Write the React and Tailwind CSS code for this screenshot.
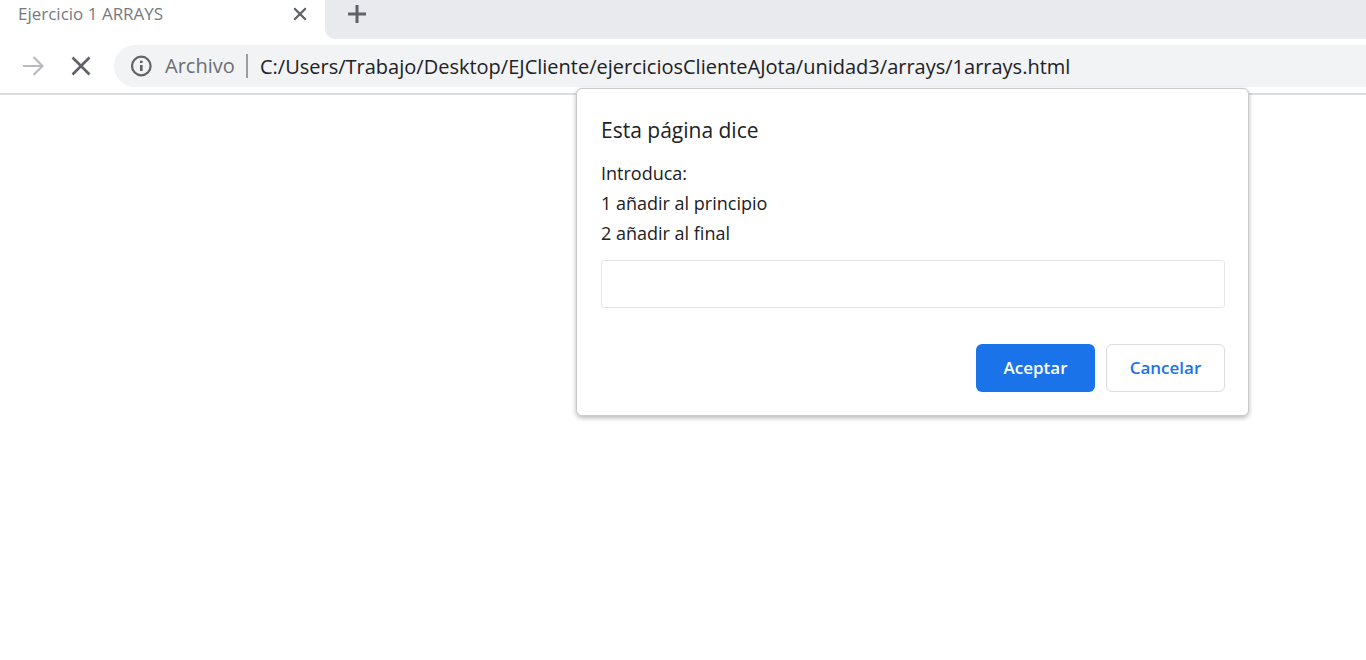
function TabStrip() {
  return (
    <div className="flex h-[39px] bg-white">
      <div className="flex h-7 w-[325px] shrink-0 items-center justify-between pr-4 pl-[18px]">
        <span className="text-[17px] leading-7 text-[#76797d]">Ejercicio 1 ARRAYS</span>
        <button type="button" aria-label="Cerrar pestaña" className="flex size-[18px] items-center justify-center">
          <svg viewBox="0 0 18 18" className="size-[18px]" fill="none" stroke="#5f6368" strokeWidth="2.3">
            <path d="M3.200 3.200l11.600 11.600M14.800 3.200L3.200 14.800" />
          </svg>
        </button>
      </div>
      <div className="flex grow rounded-bl-[10px] bg-[#e8eaed] pl-[22px]">
        <button type="button" aria-label="Nueva pestaña" className="flex h-[27px] items-center">
          <svg viewBox="0 0 20 20" className="size-5" fill="none" stroke="#5f6368" strokeWidth="3">
            <path d="M10 1v18M1 10h18" />
          </svg>
        </button>
      </div>
    </div>
  );
}

function Toolbar() {
  return (
    <div className="flex h-14 items-center border-b-2 border-[#dadce0] bg-white pl-[22px]">
      <button type="button" aria-label="Adelante" className="flex">
        <svg viewBox="0 0 22 22" className="size-[22px]" fill="none" stroke="#b9bbbe" strokeWidth="2.2">
          <path d="M1 11h19M11.500 2l9 9-9 9" />
        </svg>
      </button>
      <button type="button" aria-label="Detener la carga" className="ml-[26px] flex">
        <svg viewBox="0 0 22 22" className="size-[22px]" fill="none" stroke="#5f6368" strokeWidth="2.6">
          <path d="M2.500 2.500l17 17M19.500 2.500l-17 17" />
        </svg>
      </button>
      <div className="ml-[22px] flex h-[42px] grow items-center rounded-l-full bg-[#f1f3f4] pl-4">
        <svg viewBox="0 0 22 22" className="size-[22px] shrink-0" fill="none" stroke="#5f6368" strokeWidth="2.2">
          <circle cx="11.300" cy="11" r="9.300" />
          <path d="M11.300 10v6M11.300 5.700v2.300" strokeWidth="2.6" />
        </svg>
        <label htmlFor="address" className="ml-[13px] w-[83px] shrink-0 border-r-2 border-[#9a9da1] text-[20px] leading-6 text-[#6b6e73]">
          Archivo
        </label>
        <input
          id="address"
          type="text"
          defaultValue="C:/Users/Trabajo/Desktop/EJCliente/ejerciciosClienteAJota/unidad3/arrays/1arrays.html"
          className="ml-3 h-8 min-w-0 grow bg-transparent text-[20px] text-[#202124] outline-none"
        />
      </div>
    </div>
  );
}

function PromptDialog() {
  return (
    <form
      role="dialog"
      aria-labelledby="prompt-title"
      onSubmit={(event) => event.preventDefault()}
      className="absolute top-[88px] left-[576px] w-[673px] rounded-md border border-[#c8cacc] bg-white pt-[27px] pr-[23px] pb-[23px] pl-6 shadow-[0_2px_5px_rgba(0,0,0,0.28)]"
    >
      <h1 id="prompt-title" className="text-[21px] leading-7 text-[#202124]">Esta página dice</h1>
      <label htmlFor="answer" className="mt-[14px] block text-[18px] leading-[30px] text-[#202124]">
        Introduca:
        <br />
        1 añadir al principio
        <br />
        2 añadir al final
      </label>
      <input
        id="answer"
        type="text"
        className="mt-3 block h-12 w-full rounded-[3px] border border-[#e3e4e6] px-3 text-[18px] outline-none"
      />
      <div className="mt-9 flex justify-end gap-[11px]">
        <button type="submit" className="h-12 w-[119px] rounded-md bg-[#1a73e8] text-[17px] font-semibold text-white">
          Aceptar
        </button>
        <button type="button" className="h-12 w-[119px] rounded-md border border-[#dadce0] bg-white text-[17px] font-semibold text-[#1a73e8]">
          Cancelar
        </button>
      </div>
    </form>
  );
}

export default function App() {
  return (
    <div className="relative min-h-screen bg-white font-['Open_Sans','Noto_Sans',sans-serif]">
      <TabStrip />
      <Toolbar />
      <PromptDialog />
    </div>
  );
}
